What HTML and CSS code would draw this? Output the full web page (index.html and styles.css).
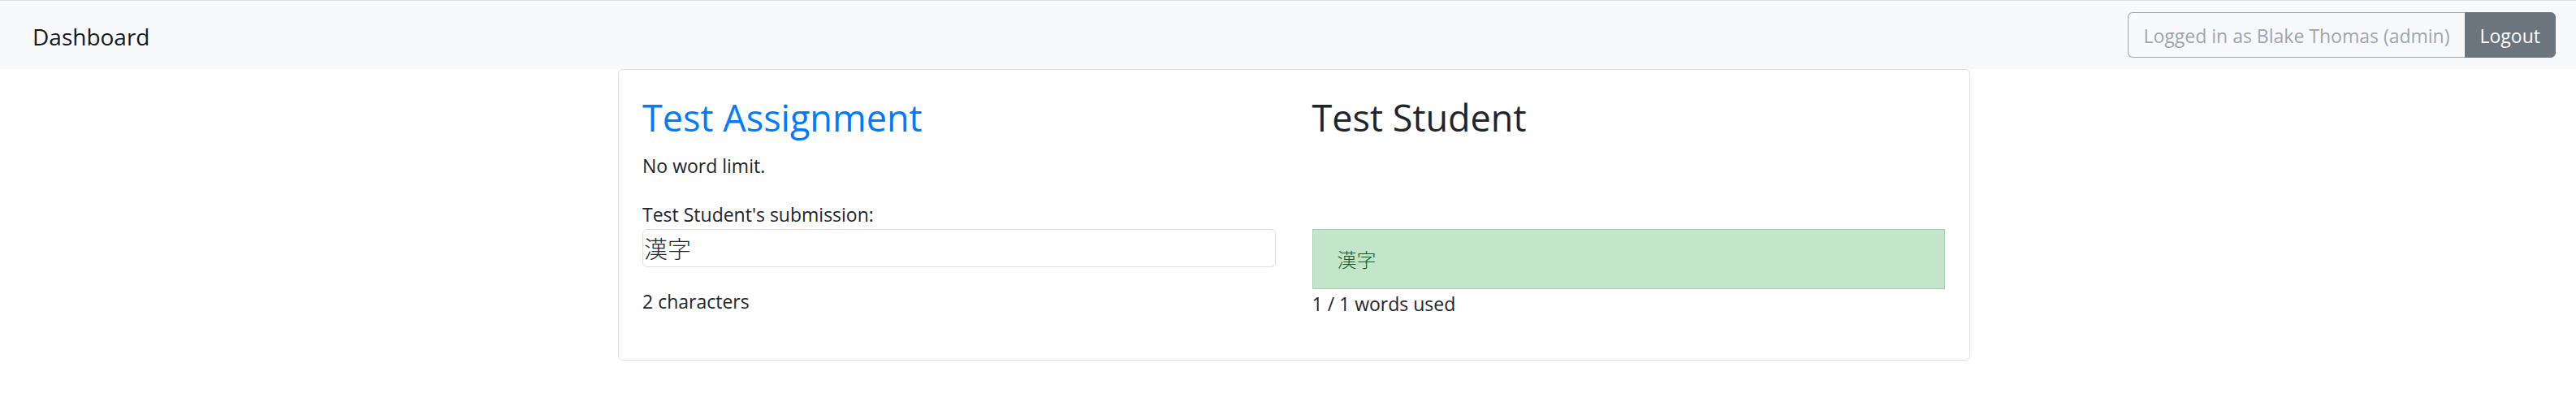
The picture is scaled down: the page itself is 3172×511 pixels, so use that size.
FILE: index.html
```html
<!DOCTYPE html>
<html lang="en">
<head>
<meta charset="utf-8">
<title>Dashboard</title>
<link rel="stylesheet" href="styles.css">
</head>
<body>
<nav class="navbar">
  <a class="brand" href="#">Dashboard</a>
  <div class="btn-group">
    <button class="btn btn-user" type="button" disabled>Logged in as Blake Thomas (admin)</button>
    <button class="btn btn-logout" type="button">Logout</button>
  </div>
</nav>
<main class="container">
  <section class="card">
    <div class="row">
      <div class="col">
        <h2 class="title"><a href="#">Test Assignment</a></h2>
        <p class="limit">No word limit.</p>
        <div>Test Student's submission:</div>
      </div>
      <div class="col">
        <h2 class="title">Test Student</h2>
      </div>
    </div>
    <div class="row">
      <div class="col">
        <div class="submission" lang="ja">漢字</div>
        <p class="count">2 characters</p>
      </div>
      <div class="col">
        <div class="result" lang="ja">漢字</div>
        <div>1 / 1 words used</div>
      </div>
    </div>
  </section>
</main>
</body>
</html>
```
FILE: styles.css
```css
* {
  box-sizing: border-box;
}

body {
  margin: 0;
  background: #fff;
  color: #212529;
  font-family: "Open Sans", "Noto Sans CJK JP", sans-serif;
  font-size: 23px;
  line-height: 36px;
}

.navbar {
  display: flex;
  align-items: center;
  justify-content: space-between;
  padding: 14px 25px 14px 40px;
  border-top: 1px solid #dee0e3;
  background: #f8f9fb;
}

.brand {
  color: #17181a;
  font-size: 28px;
  line-height: 40px;
  padding-top: 4px;
  text-decoration: none;
}

.btn-group {
  display: flex;
}

.btn {
  padding: 10px 18px 8px;
  border: 1px solid #6c757d;
  font: inherit;
}

.btn-user {
  border-color: #9fa5ab;
  border-right: 0;
  border-radius: 6px 0 0 6px;
  background: transparent;
  color: #9fa5ab;
}

.btn-logout {
  border-radius: 0 6px 6px 0;
  background: #6c757d;
  color: #fff;
}

.container {
  max-width: 1680px;
  margin: 0 auto;
  padding-left: 15px;
}

.card {
  padding: 30px 30px 30px 29px;
  border: 1px solid #dfdfdf;
  border-radius: 6px;
}

.row {
  display: grid;
  grid-template-columns: 1fr 1fr;
  gap: 45px;
}

.title {
  margin: 0 0 12px;
  font-size: 45px;
  font-weight: 400;
  line-height: 58px;
}

.title a {
  color: #007bff;
  text-decoration: none;
}

.limit {
  margin: 0 0 24px;
}

.submission {
  padding: 0 1px;
  border: 1px solid #dfdfdf;
  border-radius: 6px;
  font-family: "Noto Sans CJK JP", sans-serif;
  font-size: 29px;
  font-weight: 300;
  line-height: 45px;
}

.count {
  margin: 24px 0;
}

.result {
  padding: 18px 30px;
  border: 1px solid #a9ccb2;
  background: #c3e6cb;
  color: #155724;
  font-family: "Noto Sans CJK JP", sans-serif;
  font-size: 24px;
  font-weight: 300;
}
```
